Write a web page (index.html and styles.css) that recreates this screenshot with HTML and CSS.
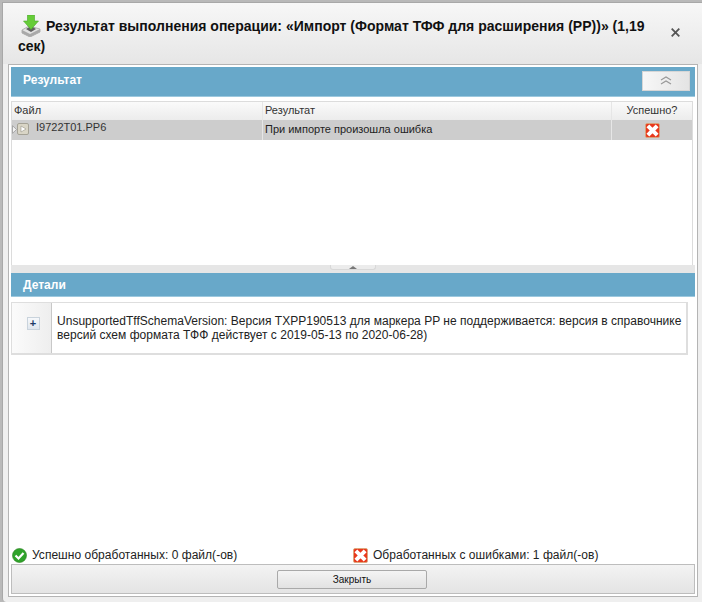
FILE: index.html
```html
<!DOCTYPE html>
<html lang="ru">
<head>
<meta charset="utf-8">
<title>Результат</title>
<link rel="stylesheet" href="styles.css">
</head>
<body>
<div class="dialog">
  <header class="head">
    <h1 class="title"><svg class="title-icon" width="20" height="22" viewBox="0 0 20 22"><path d="M1 15 L8 11 L19 14 L19 17 L9 22 L1 18Z" fill="#e2e2e2" stroke="#9a9a9a" stroke-width=".7"/><path d="M1 15 L9 19 L19 14 L19 17 L9 22 L1 18Z" fill="#a9a9a9"/><path d="M5 14 L10 11 L15 14 L10 17Z" fill="#5f5f5f"/><path d="M6.500 0 H13.500 V6 H17.500 L10 14.500 L2.500 6 H6.500Z" fill="#66cc38" stroke="#46a826" stroke-width=".6"/></svg>Результат выполнения операции: «Импорт (Формат ТФФ для расширения (PP))» (1,19 сек)</h1>
    <button class="close" aria-label="Закрыть"><svg width="9" height="9" viewBox="0 0 9 9"><path d="M.7 .7 L8.300 8.300 M8.300 .7 L.7 8.300" stroke="#555" stroke-width="1.800"/></svg></button>
  </header>
  <main class="frame">
    <div class="bar bar-top">
      <span class="bar-title">Результат</span>
      <button class="collapse" aria-label="Свернуть"><svg width="12" height="9" viewBox="0 0 12 9"><path d="M1 4 L6 1 L11 4 M1 8 L6 5 L11 8" fill="none" stroke="#999" stroke-width="1.200"/></svg></button>
    </div>
    <section class="grid">
      <div class="row row-head">
        <div class="cell c1">Файл</div>
        <div class="cell c2">Результат</div>
        <div class="cell c3">Успешно?</div>
      </div>
      <div class="row row-data">
        <div class="cell c1 file"><svg class="expander" width="5" height="9" viewBox="0 0 5 9"><path d="M.5 .7 L4.500 4.500 L.5 8.300Z" fill="#f2f2f2" stroke="#999" stroke-width=".8"/></svg><svg class="file-icon" width="12" height="12" viewBox="0 0 12 12"><rect x=".5" y=".5" width="11" height="11" rx="1.500" fill="#d9d5c6" stroke="#a5a296"/><path d="M4 3 L9 6 L4 9Z" fill="#fff" stroke="#99968a" stroke-width=".6"/></svg><span class="file-name">I9722T01.PP6</span></div>
        <div class="cell c2">При импорте произошла ошибка</div>
        <div class="cell c3"><svg width="15" height="15" viewBox="0 0 15 15"><use href="#err"/></svg></div>
      </div>
    </section>
    <div class="splitter"><span class="handle"><svg width="10" height="3" viewBox="0 0 10 3"><path d="M1 3 L5 0 L9 3Z" fill="#777"/></svg></span></div>
    <div class="bar bar-details"><span class="bar-title">Детали</span></div>
    <section class="details">
      <div class="det-side"><span class="plus">+</span></div>
      <div class="det-text">UnsupportedTffSchemaVersion: Версия TXPP190513 для маркера PP не поддерживается: версия в справочнике версий схем формата ТФФ действует с 2019-05-13 по 2020-06-28)</div>
    </section>
    <div class="status">
      <div class="stat stat-ok"><svg width="15" height="15" viewBox="0 0 15 15"><circle cx="7.500" cy="7.500" r="7" fill="#2fa32a" stroke="#2a7f20" stroke-width=".6"/><path d="M3.500 7.500 L6.500 10.500 L11.500 5" fill="none" stroke="#fff" stroke-width="2.200"/></svg><span>Успешно обработанных: 0 файл(-ов)</span></div>
      <div class="stat stat-err"><svg width="15" height="15" viewBox="0 0 15 15"><use href="#err"/></svg><span>Обработанных с ошибками: 1 файл(-ов)</span></div>
    </div>
    <footer class="foot"><button class="btn">Закрыть</button></footer>
  </main>
</div>
<svg class="defs" width="0" height="0"><defs><g id="err"><rect x=".5" y=".5" width="14" height="14" rx="1.500" fill="#e8391c" stroke="#d9a878" stroke-width=".8"/><path d="M4.300 4.300 L10.700 10.700 M10.700 4.300 L4.300 10.700" stroke="#fff" stroke-width="4" stroke-linecap="square"/></g></defs></svg>
</body>
</html>
```
FILE: styles.css
```css
* { box-sizing: border-box; }
html, body { margin: 0; padding: 0; }
body {
  width: 702px;
  height: 602px;
  overflow: hidden;
  background: #b9b9b9;
  font-family: "Liberation Sans", Arial, sans-serif;
  font-size: 12px;
  color: #222;
}
.dialog {
  width: 700px;
  height: 600px;
  margin: 2px 0 0 2px;
  border-top: 1px solid #a8a8a8;
  border-left: 1px solid #a8a8a8;
  border-radius: 0 0 0 4px;
  background: #efefef;
  display: flex;
  flex-direction: column;
}
.head {
  height: 61px;
  flex: none;
  background: linear-gradient(#f7f7f7, #e6e6e6);
  padding: 13px 0 0 15px;
  display: flex;
}
.title {
  margin: 0;
  width: 640px;
  font-size: 14px;
  line-height: 20px;
  font-weight: bold;
  color: #111;
  letter-spacing: .01px;
}
.title-icon {
  vertical-align: -5px;
  margin: -6px 5px -1px 3px;
}
.close {
  border: 0;
  background: none;
  padding: 0;
  margin: 12px 0 0 13px;
  width: 9px;
  height: 9px;
  display: flex;
}
.frame {
  width: 690px;
  height: 533px;
  margin-left: 5px;
  padding: 2px;
  border: 1px solid #b4b4b4;
  background: #fff;
  display: flex;
  flex-direction: column;
}
.bar {
  background: #68a8c9;
  color: #fff;
  font-weight: bold;
  display: flex;
  align-items: center;
  justify-content: space-between;
  flex: none;
}
.bar-title { font-size: 12px; }
.bar-top {
  height: 30px;
  padding: 0 3px 0 12px;
  border-bottom: 1px solid #9cc8de;
}
.bar-top .bar-title { margin-top: -4px; }
.collapse {
  width: 48px;
  height: 20px;
  margin: -2px 2px 0 0;
  padding: 0;
  border: 1px solid #d6d6d6;
  background: linear-gradient(90deg, #f7f7f7, #e4e4e4);
  display: flex;
  align-items: center;
  justify-content: center;
}
.grid {
  flex: none;
  height: 164px;
  margin-top: 4px;
  border: 1px solid #dcdcdc;
  border-width: 1px 1px 0 1px;
  width: 682px;
}
.row { display: flex; }
.row-head {
  height: 18px;
  background: linear-gradient(#fafafa, #ececec);
  color: #333;
  font-size: 11px;
  line-height: 16px;
}
.row-data {
  height: 20px;
  background: #cdcdcd;
  font-size: 11px;
  line-height: 19px;
  color: #222;
}
.cell {
  border-right: 1px solid #e6e6e6;
  padding: 0 2px;
  white-space: nowrap;
}
.c1 { width: 251px; }
.c2 { width: 349px; }
.c3 { flex: 1; text-align: center; border-right: 0; }
.row-data .c3 { display: flex; align-items: center; justify-content: center; }
.file { display: flex; align-items: flex-start; padding: 0; }
.expander { margin-top: 5px; flex: none; }
.file-icon { margin: 3px 0 0 0; flex: none; }
.file-name { margin: -2px 0 0 7px; color: #333; }
.splitter {
  flex: none;
  height: 8px;
  background: #e6e6e6;
  display: flex;
  justify-content: center;
}
.handle {
  width: 46px;
  height: 5px;
  border: 1px solid #d8d8d8;
  border-top: 0;
  border-radius: 0 0 3px 3px;
  background: #ececec;
  display: flex;
  align-items: center;
  justify-content: center;
}
.bar-details {
  height: 24px;
  padding: 0 12px;
  border-bottom: 1px solid #9cc8de;
}
.bar-details .bar-title { margin-top: 1px; }
.details {
  flex: none;
  width: 677px;
  height: 53px;
  margin-top: 5px;
  display: flex;
  border: 2px solid #dedede;
  border-width: 1px 2px 2px 1px;
}
.det-side {
  width: 40px;
  flex: none;
  background: linear-gradient(90deg, #fbfbfb, #eeeeee);
  border-right: 1px solid #c8c8c8;
  display: flex;
  align-items: flex-start;
  justify-content: center;
  padding-top: 14px;
}
.plus {
  width: 13px;
  height: 13px;
  margin-left: 3px;
  border: 1px solid #c9d3dc;
  background: linear-gradient(#f6f8fb, #dfe6ee);
  color: #1d3a66;
  font-size: 11px;
  font-weight: bold;
  line-height: 11px;
  text-align: center;
}
.det-text {
  flex: 1;
  padding: 11px 0 0 5px;
  font-size: 12px;
  line-height: 14px;
  color: #222;
  letter-spacing: .02px;
}
.status {
  flex: none;
  margin-top: auto;
  height: 17px;
  display: flex;
  font-size: 12px;
  line-height: 15px;
  color: #222;
  letter-spacing: .03px;
}
.stat { display: flex; align-items: flex-start; gap: 5px; }
.stat span { margin-top: 1px; }
.stat-ok { width: 342px; padding-left: 1px; }
.stat svg { margin-top: 1px; flex: none; }
.foot {
  flex: none;
  height: 30px;
  border: 1px solid #bdbdbd;
  background: linear-gradient(#f3f3f3, #e4e4e4);
  display: flex;
  justify-content: center;
  padding-top: 5px;
}
.btn {
  width: 150px;
  height: 19px;
  padding: 0;
  margin-left: -2px;
  border: 1px solid #a9a9a9;
  border-radius: 2px;
  background: linear-gradient(#f4f4f4, #e2e2e2);
  font-family: inherit;
  font-size: 10px;
  color: #111;
}
.defs { position: absolute; }
```
